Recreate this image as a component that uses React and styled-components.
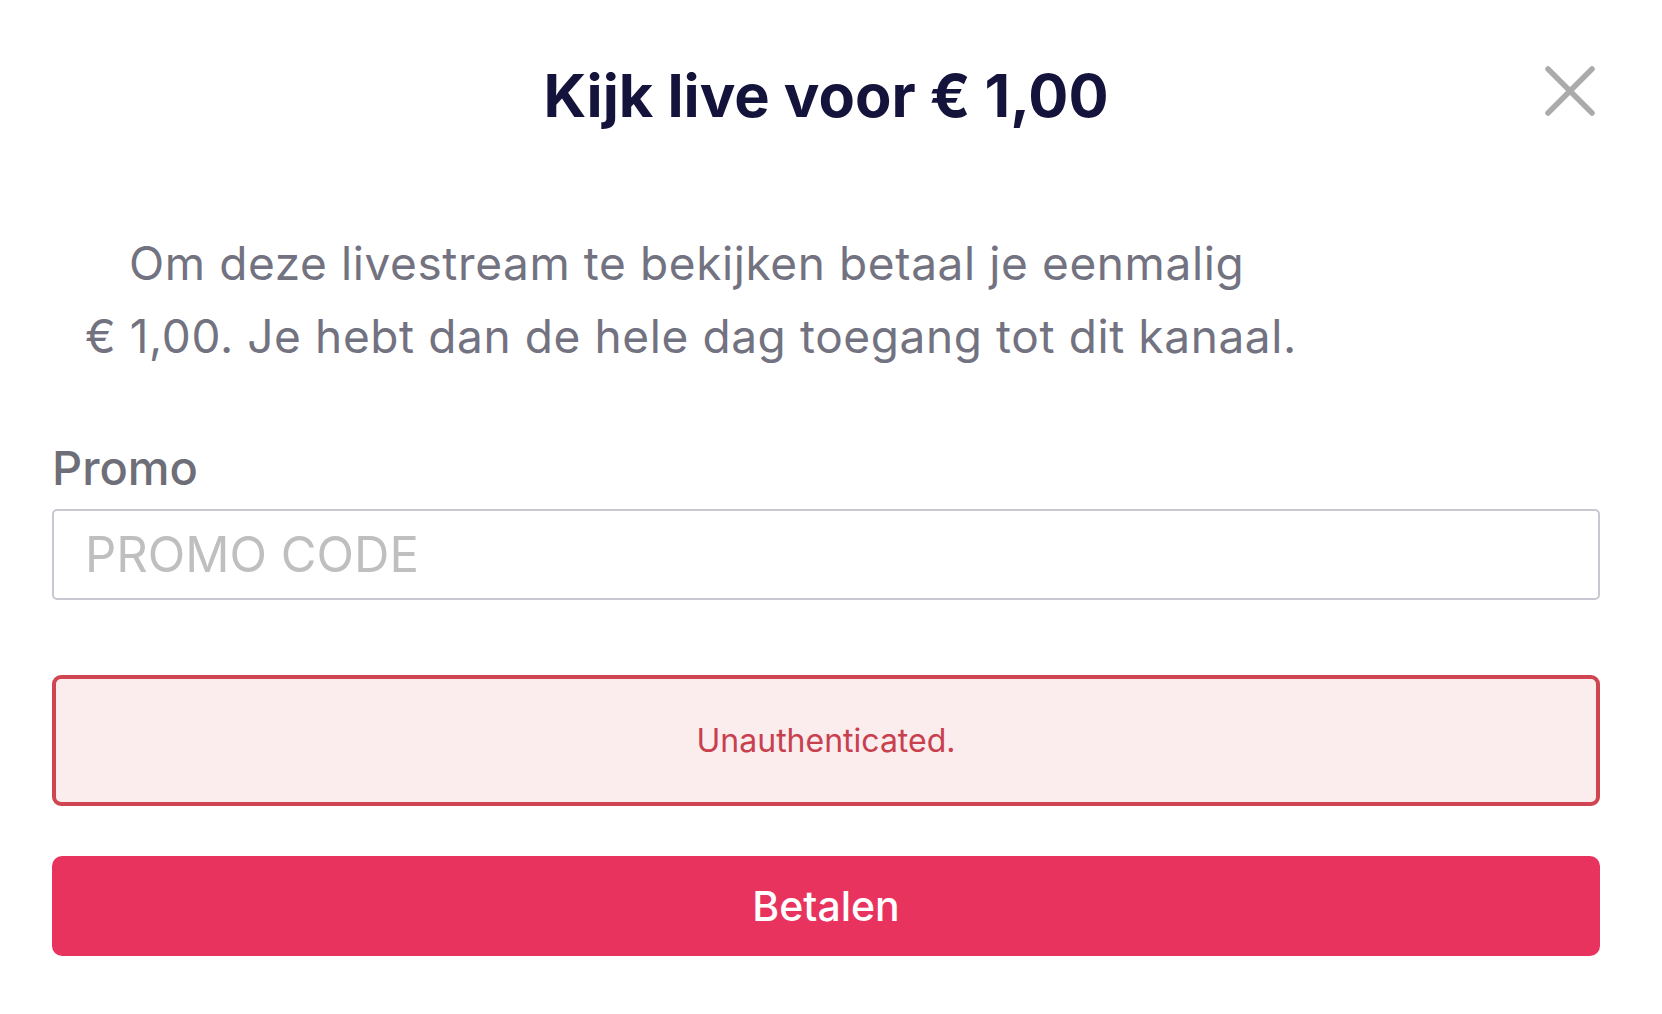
import React from "react";
import styled, { createGlobalStyle } from "styled-components";

const GlobalStyle = createGlobalStyle`
  body {
    margin: 0;
    background: #ffffff;
    font-family: Inter, "Noto Sans", sans-serif;
  }
`;

const Page = styled.div`
  padding: 55px 62px 40px 52px;
  box-sizing: border-box;
  width: 100%;
`;

const Header = styled.div`
  display: grid;
  grid-template-columns: 1fr auto 1fr;
  align-items: center;
  height: 80px;
`;

const Title = styled.h1`
  grid-column: 2;
  margin: 0;
  font-size: 59.5px;
  font-weight: 700;
  color: #14133b;
  white-space: nowrap;
`;

const CloseButton = styled.button`
  grid-column: 3;
  justify-self: end;
  width: 50px;
  height: 50px;
  padding: 0;
  margin: 0 5px 9px 0;
  border: none;
  background: none;
  cursor: pointer;
  display: flex;
  align-items: center;
  justify-content: center;
`;

const Intro = styled.p`
  margin: 92px 0 0;
  padding: 0 240px 0 33px;
  text-indent: 44px;
  font-size: 46px;
  letter-spacing: 0.6px;
  line-height: 73px;
  color: #727280;
`;

const Label = styled.label`
  display: block;
  margin-top: 66px;
  font-size: 47px;
  font-weight: 500;
  color: #6e6e78;
`;

const Input = styled.input`
  display: block;
  width: 100%;
  height: 91px;
  margin-top: 13px;
  box-sizing: border-box;
  border: 2px solid #c8c8d2;
  border-radius: 5px;
  padding: 0 31px;
  font-family: inherit;
  font-size: 49px;
  color: #333;
  outline: none;
  &::placeholder {
    color: #bfbfbf;
  }
`;

const ErrorBox = styled.div`
  margin-top: 75px;
  height: 131px;
  box-sizing: border-box;
  border: 4.5px solid #cf4652;
  border-radius: 9px;
  background: #fbeced;
  display: flex;
  align-items: center;
  justify-content: center;
  font-size: 32px;
  color: #c8404e;
`;

const PayButton = styled.button`
  display: block;
  width: 100%;
  height: 100px;
  margin-top: 50px;
  border: none;
  border-radius: 10px;
  background: #e9335f;
  color: #ffffff;
  font-family: inherit;
  font-size: 41px;
  font-weight: 500;
  cursor: pointer;
`;

export default function App() {
  return (
    <>
      <GlobalStyle />
      <Page>
        <Header>
          <Title>Kijk live voor € 1,00</Title>
          <CloseButton aria-label="Sluiten">
            <svg width="50" height="50" viewBox="0 0 50 50">
              <path
                d="M3 3 L47 47 M47 3 L3 47"
                stroke="#ababab"
                strokeWidth="5.5"
                strokeLinecap="round"
              />
            </svg>
          </CloseButton>
        </Header>
        <Intro>
          Om deze livestream te bekijken betaal je eenmalig {"€\u00a01,00"}. Je
          hebt dan de hele dag toegang tot dit kanaal.
        </Intro>
        <Label htmlFor="promo">Promo</Label>
        <Input id="promo" placeholder="PROMO CODE" />
        <ErrorBox>Unauthenticated.</ErrorBox>
        <PayButton>Betalen</PayButton>
      </Page>
    </>
  );
}
